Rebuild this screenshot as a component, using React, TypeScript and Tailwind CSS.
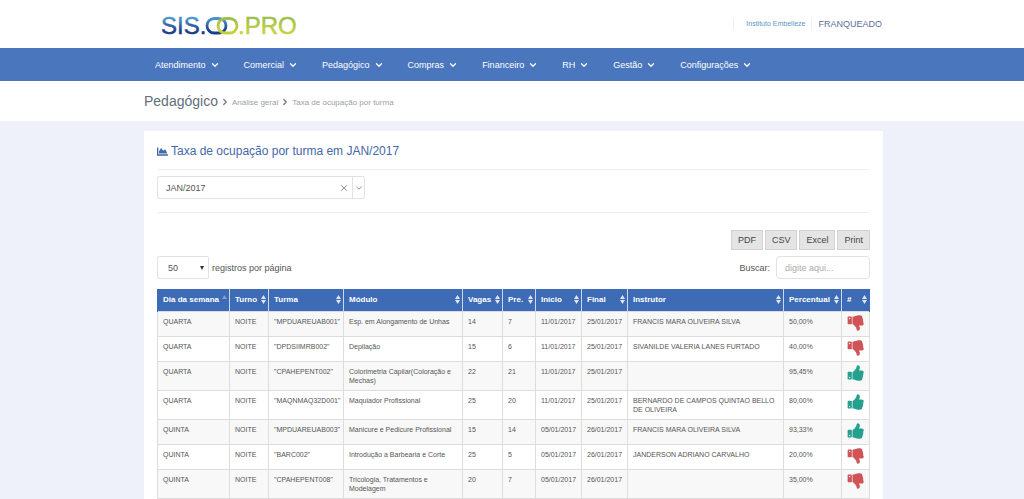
import { useState } from 'react';
import { FaChartArea } from 'react-icons/fa';
import { ChevronDown, ChevronRight, X } from 'lucide-react';

interface Turma {
  dia: string;
  turno: string;
  turma: string;
  modulo: string;
  vagas: number;
  presentes: number;
  inicio: string;
  final: string;
  instrutor: string;
  percentual: string;
  ok: boolean;
}

const menu = ['Atendimento', 'Comercial', 'Pedagógico', 'Compras', 'Financeiro', 'RH', 'Gestão', 'Configurações'];

const columns = [
  { label: 'Dia da semana', width: 'w-[72px]' },
  { label: 'Turno', width: 'w-[39px]' },
  { label: 'Turma', width: 'w-[75px]' },
  { label: 'Módulo', width: 'w-[119px]' },
  { label: 'Vagas', width: 'w-[40px]' },
  { label: 'Pre.', width: 'w-[33px]' },
  { label: 'Início', width: 'w-[46px]' },
  { label: 'Final', width: 'w-[46px]' },
  { label: 'Instrutor', width: 'w-auto' },
  { label: 'Percentual', width: 'w-[58px]' },
  { label: '#', width: 'w-[28px]' },
];

const turmas: Turma[] = [
  { dia: 'QUARTA', turno: 'NOITE', turma: '"MPDUAREUAB001"', modulo: 'Esp. em Alongamento de Unhas', vagas: 14, presentes: 7, inicio: '11/01/2017', final: '25/01/2017', instrutor: 'FRANCIS MARA OLIVEIRA SILVA', percentual: '50,00%', ok: false },
  { dia: 'QUARTA', turno: 'NOITE', turma: '"DPDSIIMRB002"', modulo: 'Depilação', vagas: 15, presentes: 6, inicio: '11/01/2017', final: '25/01/2017', instrutor: 'SIVANILDE VALERIA LANES FURTADO', percentual: '40,00%', ok: false },
  { dia: 'QUARTA', turno: 'NOITE', turma: '"CPAHEPENT002"', modulo: 'Colorimetria Capilar(Coloração e Mechas)', vagas: 22, presentes: 21, inicio: '11/01/2017', final: '25/01/2017', instrutor: '', percentual: '95,45%', ok: true },
  { dia: 'QUARTA', turno: 'NOITE', turma: '"MAQNMAQ32D001"', modulo: 'Maquiador Profissional', vagas: 25, presentes: 20, inicio: '11/01/2017', final: '25/01/2017', instrutor: 'BERNARDO DE CAMPOS QUINTAO BELLO DE OLIVEIRA', percentual: '80,00%', ok: true },
  { dia: 'QUINTA', turno: 'NOITE', turma: '"MPDUAREUAB003"', modulo: 'Manicure e Pedicure Profissional', vagas: 15, presentes: 14, inicio: '05/01/2017', final: '26/01/2017', instrutor: 'FRANCIS MARA OLIVEIRA SILVA', percentual: '93,33%', ok: true },
  { dia: 'QUINTA', turno: 'NOITE', turma: '"BARC002"', modulo: 'Introdução a Barbearia e Corte', vagas: 25, presentes: 5, inicio: '05/01/2017', final: '26/01/2017', instrutor: 'JANDERSON ADRIANO CARVALHO', percentual: '20,00%', ok: false },
  { dia: 'QUINTA', turno: 'NOITE', turma: '"CPAHEPENT008"', modulo: 'Tricologia, Tratamentos e Modelagem', vagas: 20, presentes: 7, inicio: '05/01/2017', final: '26/01/2017', instrutor: '', percentual: '35,00%', ok: false },
];

function Logo() {
  return (
    <svg width="140" height="28" viewBox="0 0 140 28" role="img" aria-label="SIS.OO.PRO">
      <defs>
        <linearGradient id="blue" gradientUnits="userSpaceOnUse" x1="0" y1="7" x2="0" y2="24">
          <stop offset="0.1" stopColor="#4a94d0" />
          <stop offset="0.8" stopColor="#1c3f86" />
        </linearGradient>
        <linearGradient id="green" gradientUnits="userSpaceOnUse" x1="0" y1="7" x2="0" y2="24">
          <stop offset="0.1" stopColor="#9dc04a" />
          <stop offset="0.8" stopColor="#c3d23c" />
        </linearGradient>
      </defs>
      <g fontFamily="Liberation Sans, Arial, sans-serif" fontSize="24" strokeWidth="0.5">
        <text x="0" y="24" fill="url(#blue)" stroke="url(#blue)">SIS.</text>
        <text x="77" y="24" fill="url(#green)" stroke="url(#green)">.PRO</text>
      </g>
      {/* Interlocked rings */}
      <g fill="none" strokeWidth="2.8">
        <rect x="46" y="8.5" width="19" height="14.5" rx="7.2" stroke="url(#blue)" />
        <rect x="57" y="8.5" width="19" height="14.5" rx="7.2" stroke="url(#green)" />
      </g>
    </svg>
  );
}

function SortIcon({ active }: { active: boolean }) {
  return (
    <svg className="h-[9px] w-[5px] shrink-0" viewBox="0 0 5 9">
      <path d="M2.5 0 5 4H0z" fill={active ? '#7f9fd6' : '#dfe6f4'} />
      {!active && <path d="M2.5 9 0 5h5z" fill="#dfe6f4" />}
    </svg>
  );
}

function Thumb({ up }: { up: boolean }) {
  return (
    <svg
      className={`size-[18px] fill-current ${up ? 'text-[#26a08e]' : '-scale-y-100 text-[#d05457]'}`}
      viewBox="0 0 1792 1792"
      role="img"
      aria-label={up ? 'Positivo' : 'Negativo'}
    >
      <path d="M320 1344q0-26-19-45t-45-19q-27 0-45.5 19t-18.5 45q0 27 18.5 45.5t45.5 18.5q26 0 45-18.5t19-45.5zm160-512v640q0 26-19 45t-45 19h-288q-26 0-45-19t-19-45v-640q0-26 19-45t45-19h288q26 0 45 19t19 45zm1184 0q0 86-55 149 15 44 15 76 3 76-43 137 17 56 0 117-15 57-54 94 9 112-49 181-64 76-197 78h-129q-66 0-144-15.5t-121.5-29-120.5-39.5q-123-43-158-44-26-1-45-19.5t-19-44.5v-641q0-25 18-43.5t43-20.5q24-2 76-59t101-121q68-87 101-120 18-18 31-48t17.5-48.5 13.5-60.5q7-39 12.5-61t19.5-52 34-50q19-19 45-19 46 0 82.5 10.5t60 26 40 40.5 24 45 12 50 5 45 .5 39q0 38-9.5 76t-19 60-27.5 56q-3 6-10 18t-11 22-8 24h277q78 0 135 57t57 135z" />
    </svg>
  );
}

export default function App() {
  const [mes, setMes] = useState('JAN/2017');
  const [busca, setBusca] = useState('');

  const rows = turmas.filter(t =>
    `${t.dia} ${t.turma} ${t.modulo} ${t.instrutor}`.toLowerCase().includes(busca.toLowerCase())
  );

  return (
    <div className="min-h-screen bg-[#eef1f9] font-['Liberation_Sans',Arial,sans-serif] text-[9px] leading-3 text-[#555]">
      {/* Header */}
      <header className="bg-white">
        <div className="mx-auto flex h-12 max-w-[742px] items-center justify-between pr-px pl-5">
          <a href="#">
            <Logo />
          </a>
          <div className="flex items-center">
            <a href="#" className="border-l border-[#eceff3] px-3 pr-1.5 text-[7px] text-[#5b96c9]">
              Instituto Embelleze
            </a>
            <a href="#" className="border-l border-[#eceff3] pl-1.5 text-[#5c6f9b]">
              FRANQUEADO
            </a>
          </div>
        </div>
      </header>

      {/* Menu */}
      <nav className="bg-[#4a76be]">
        <ul className="mx-auto flex h-[33px] max-w-[742px] items-center pl-0.5">
          {menu.map(item => (
            <li key={item}>
              <button type="button" className="flex items-center gap-1 px-3 text-white">
                {item}
                <ChevronDown className="size-2.5" strokeWidth={3} />
              </button>
            </li>
          ))}
        </ul>
      </nav>

      {/* Breadcrumb */}
      <div className="bg-white">
        <div className="mx-auto flex h-10 max-w-[742px] items-center gap-0.5 pl-[3px] text-[8px] text-[#9a9fa5]">
          <h1 className="text-[14px] leading-4 text-[#5f6f7a]">Pedagógico</h1>
          <ChevronRight className="mt-0.5 size-2.5 text-[#777]" strokeWidth={3} />
          <a href="#" className="pt-1">Análise geral</a>
          <ChevronRight className="mt-0.5 size-2.5 text-[#777]" strokeWidth={3} />
          <a href="#" className="pt-1">Taxa de ocupação por turma</a>
        </div>
      </div>

      <main className="mx-auto max-w-[742px] py-2.5 pl-[3px]">
        <section className="bg-white px-[13px] pt-3 pb-4">
          <h2 className="flex items-center gap-[3px] text-[12px] leading-4 text-[#4468a8]">
            <FaChartArea className="size-[11px]" />
            Taxa de ocupação por turma em JAN/2017
          </h2>

          <div className="mt-2.5 border-y border-[#eee] pt-1.5 pb-[13px]">
            <div className="flex h-[23px] w-52 items-center rounded-xs border border-[#e2e2e2]">
              <select
                aria-label="Mês"
                value={mes}
                onChange={e => setMes(e.target.value)}
                className="h-full flex-1 appearance-none pl-2 outline-none"
              >
                <option value=""></option>
                <option value="JAN/2017">JAN/2017</option>
                <option value="DEZ/2016">DEZ/2016</option>
              </select>
              <button type="button" aria-label="Limpar" onClick={() => setMes('')} className="px-[3px] text-[#777]">
                <X className="size-2.5" />
              </button>
              <span className="flex h-full w-3 items-center justify-center border-l border-[#e2e2e2] text-[#777]">
                <ChevronDown className="size-2.5" />
              </span>
            </div>
          </div>

          {/* Export buttons */}
          <div className="mt-[17px] flex justify-end gap-0.5">
            {['PDF', 'CSV', 'Excel', 'Print'].map(label => (
              <button
                key={label}
                type="button"
                className="h-5 border border-[#d2d2d2] bg-[#e4e4e4] px-1.5 text-[#444]"
              >
                {label}
              </button>
            ))}
          </div>

          <div className="mt-1.5 mb-2.5 flex items-center justify-between">
            <label className="flex items-center gap-[3px]">
              <span className="flex h-[23px] w-[52px] items-center rounded-xs border border-[#e2e2e2] pr-1">
                <select className="h-full flex-1 appearance-none pl-2.5 outline-none" defaultValue="50">
                  <option>10</option>
                  <option>25</option>
                  <option>50</option>
                  <option>100</option>
                </select>
                <svg className="h-1 w-1 shrink-0" viewBox="0 0 4 4">
                  <path d="M0 0h4L2 4z" fill="#333" />
                </svg>
              </span>
              registros por página
            </label>
            <label className="flex items-center gap-1.5">
              Buscar:
              <input
                type="search"
                value={busca}
                onChange={e => setBusca(e.target.value)}
                placeholder="digite aqui..."
                className="h-[23px] w-[94px] rounded-sm border border-[#e2e2e2] px-2 outline-none placeholder:text-[#aaa]"
              />
            </label>
          </div>

          <table className="w-full table-fixed border-collapse text-left text-[7px] leading-[9px]">
            <thead className="bg-[#3d6bb5] text-[8px] text-white">
              <tr>
                {columns.map((col, i) => (
                  <th
                    key={col.label}
                    className={`${col.width} h-[22px] border-x border-[#cdd8ea] pr-0.5 pl-[5px] first:border-l-[#3d6bb5] last:border-r-[#3d6bb5]`}
                  >
                    <span className="flex items-center justify-between whitespace-nowrap">
                      {col.label}
                      <SortIcon active={i === 0} />
                    </span>
                  </th>
                ))}
              </tr>
            </thead>
            <tbody className="[&_td]:border [&_td]:border-[#ddd] [&_td]:px-[5px] [&_td]:pt-[5px] [&_td]:pb-[5px] [&_td]:align-top">
              {rows.map(t => (
                <tr key={t.turma} className="odd:bg-[#f8f8f8]">
                  <td>{t.dia}</td>
                  <td>{t.turno}</td>
                  <td className="whitespace-nowrap">{t.turma}</td>
                  <td>{t.modulo}</td>
                  <td>{t.vagas}</td>
                  <td>{t.presentes}</td>
                  <td>{t.inicio}</td>
                  <td>{t.final}</td>
                  <td>{t.instrutor}</td>
                  <td>{t.percentual}</td>
                  <td className="pt-0.5! pb-1!">
                    <Thumb up={t.ok} />
                  </td>
                </tr>
              ))}
            </tbody>
          </table>
        </section>
      </main>
    </div>
  );
}
